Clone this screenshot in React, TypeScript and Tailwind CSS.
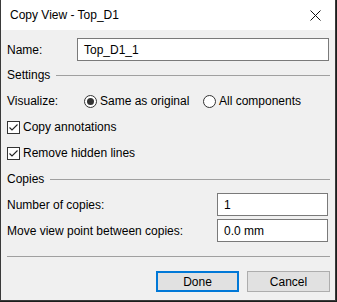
import React from "react";

const font = { fontFamily: '"Liberation Sans", Arial, sans-serif' };

function Radio({ checked, label }: { checked?: boolean; label: string }) {
  return (
    <div className="flex items-center">
      <span className="flex h-[13px] w-[13px] items-center justify-center rounded-full border border-[#333] bg-white">
        {checked && <span className="h-[7px] w-[7px] rounded-full bg-[#333]" />}
      </span>
      <span className="ml-[3px]">{label}</span>
    </div>
  );
}

function Check({ label }: { label: string }) {
  return (
    <div className="flex h-[20px] items-center">
      <span className="flex h-[13px] w-[13px] items-center justify-center border border-[#333] bg-white">
        <svg width="11" height="11" viewBox="0 0 11 11" fill="none">
          <path d="M1.5 5.5 L4 8 L9.5 2.5" stroke="#222" strokeWidth="1.1" />
        </svg>
      </span>
      <span className="ml-[3px]">{label}</span>
    </div>
  );
}

function Group({ title }: { title: string }) {
  return (
    <div className="flex h-[14px] items-center">
      <span>{title}</span>
      <span className="ml-[6px] h-px flex-1 bg-[#a0a0a0]" />
    </div>
  );
}

function Field({ value, className }: { value: string; className: string }) {
  return (
    <div className={`flex h-[23px] items-center border border-[#7a7a7a] bg-white pl-[6px] ${className}`}>
      {value}
    </div>
  );
}

export default function App() {
  return (
    <div className="h-[302px] w-[337px] bg-[#1b1f1d] text-[12px] text-black" style={font}>
      <div className="flex h-[301px] w-[336px] flex-col border-x border-b border-[#3a3a3a] bg-[#f0f0f0]">
        <div className="flex h-[30px] items-center justify-between bg-white pl-[9px] pr-[14px]">
          <span>Copy View - Top_D1</span>
          <svg width="11" height="11" viewBox="0 0 11 11">
            <path d="M0.5 0.5 L10.5 10.5 M10.5 0.5 L0.5 10.5" stroke="#111" strokeWidth="1" />
          </svg>
        </div>

        <div className="flex flex-col pl-[6px] pr-[5px]">
          <div className="mt-[8px] flex items-center">
            <span className="w-[70px]">Name:</span>
            <Field value="Top_D1_1" className="mr-px flex-1" />
          </div>

          <div className="mt-[7px]">
            <Group title="Settings" />
          </div>

          <div className="mt-[9px] flex h-[20px] items-center">
            <span className="w-[77px]">Visualize:</span>
            <div className="w-[119px]">
              <Radio checked label="Same as original" />
            </div>
            <Radio label="All components" />
          </div>

          <div className="mt-[6px]">
            <Check label="Copy annotations" />
          </div>
          <div className="mt-[6px]">
            <Check label="Remove hidden lines" />
          </div>

          <div className="mt-[9px]">
            <Group title="Copies" />
          </div>

          <div className="mt-[7px] flex items-center">
            <span className="w-[210px]">Number of copies:</span>
            <Field value="1" className="w-[111px]" />
          </div>
          <div className="mt-[3px] flex items-center">
            <span className="w-[210px]">Move view point between copies:</span>
            <Field value="0.0 mm" className="w-[111px]" />
          </div>

          <div className="mt-[14px] h-px bg-[#a0a0a0]" />

          <div className="mt-[14px] flex justify-end gap-[8px]">
            <button className="h-[21px] w-[83px] border-2 border-[#0078d7] bg-[#e1e1e1]">Done</button>
            <button className="h-[21px] w-[83px] border border-[#adadad] bg-[#e1e1e1]">Cancel</button>
          </div>
        </div>
      </div>
    </div>
  );
}
